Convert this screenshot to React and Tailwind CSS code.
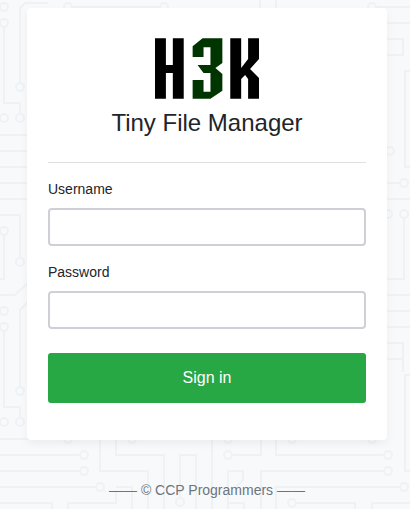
function CircuitBackground() {
  return (
    <svg
      className="pointer-events-none absolute left-0 top-0 -z-10"
      width="410"
      height="509"
      viewBox="0 0 410 509"
      fill="none"
      stroke="#eff2f4"
      strokeWidth="2"
      aria-hidden="true"
    >
      <path d="M4 27V103H20V114M20 83V8L25 3H48M72 7H160M0 135H30M0 151H30M0 167H30M0 183H30M0 199H30M0 215H20V258M4 235V279H0M0 295H15L30 281M4 331V407H20V418M20 387V310L30 300" />
      <path d="M0 439H30M0 455H80M0 471H80M0 487H96M0 503H52V509M68 509V503H116V492M116 487H132V509M100 436V471H148V509M116 436V455H164V509M180 498V455H196V509M212 436V509" />
      <path d="M232 455H261V436M276 436V455H384M384 471H261V509M400 487H276V509M296 503H355V509M372 509V503H410M228 509V471H243V480L236 487M228 503H244V509" />
      <path d="M260 0V8M276 0V8M376 7H410M385 23H410M385 39H403V55H385M410 71H405V167H410M385 183H400M385 199H410M404 218V279H385M385 295H410M385 311H410M385 327H410M385 343H403V359H385M403 359V372M410 375H405V471H410" />
      <g>
        <circle cx="4" cy="7" r="4" />
        <circle cx="4" cy="23" r="4" />
        <circle cx="4" cy="118" r="4" />
        <circle cx="20" cy="118" r="4" />
        <circle cx="20" cy="87" r="4" />
        <circle cx="4" cy="231" r="4" />
        <circle cx="20" cy="262" r="4" />
        <circle cx="4" cy="311" r="4" />
        <circle cx="4" cy="327" r="4" />
        <circle cx="4" cy="422" r="4" />
        <circle cx="20" cy="422" r="4" />
        <circle cx="20" cy="391" r="4" />
        <circle cx="68" cy="7" r="4" />
        <circle cx="164" cy="7" r="4" />
        <circle cx="84" cy="455" r="4" />
        <circle cx="84" cy="471" r="4" />
        <circle cx="100" cy="487" r="4" />
        <circle cx="68" cy="439" r="4" />
        <circle cx="132" cy="439" r="4" />
        <circle cx="180" cy="502" r="4" />
        <circle cx="228" cy="439" r="4" />
        <circle cx="292" cy="439" r="4" />
        <circle cx="372" cy="439" r="4" />
        <circle cx="228" cy="455" r="4" />
        <circle cx="388" cy="455" r="4" />
        <circle cx="388" cy="471" r="4" />
        <circle cx="404" cy="487" r="4" />
        <circle cx="292" cy="503" r="4" />
        <circle cx="388" cy="214" r="4" />
        <circle cx="404" cy="214" r="4" />
        <circle cx="404" cy="183" r="4" />
        <circle cx="390" cy="151" r="4" />
        <circle cx="372" cy="7" r="4" />
      </g>
    </svg>
  );
}

function Logo() {
  return (
    <svg width="104" height="62" viewBox="0 0 105 62" role="img" aria-label="H3K">
      <path fill="#000" d="M0 0H11V27H18V0H29V61H18V35H11V61H0Z" />
      <path
        fill="#003500"
        d="M48 0H68V25L61 30L68 36V53L56 61H38V42H49V54H56V35H49L43 27H56V9H49V19H38V8Z"
      />
      <path fill="#000" d="M76 0H87V30L94 21V0H105V21L96 31L105 40V61H94V41L91 37L87 41V61H76Z" />
    </svg>
  );
}

function Field({ id, label, type, autoComplete }) {
  return (
    <div className="mb-4">
      <label htmlFor={id} className="mb-2 block text-sm leading-[21px]">
        {label}
      </label>
      <input
        id={id}
        name={id}
        type={type}
        autoComplete={autoComplete}
        className="block h-[38px] w-full rounded border-2 border-[#ced0d6] bg-white px-3 text-sm outline-none focus:border-[#28a745]"
      />
    </div>
  );
}

export default function App() {
  return (
    <div className="relative isolate flex min-h-screen flex-col items-center overflow-hidden bg-[#f7f9fb] pl-1 pt-2 font-['Liberation_Sans',Arial,sans-serif] text-[#212529]">
      <CircuitBackground />
      <main className="w-full max-w-[360px] rounded-sm bg-white px-[21px] pb-[37px] pt-[30px] shadow-[0_4px_8px_rgba(0,0,0,0.05)]">
        <form onSubmit={(event) => event.preventDefault()}>
          <div className="flex flex-col items-center gap-2">
            <Logo />
            <h1 className="text-2xl leading-[30px]">Tiny File Manager</h1>
          </div>
          <hr className="mb-4 mt-6 border-[#dfe0e1]" />
          <Field id="username" label="Username" type="text" autoComplete="username" />
          <Field id="password" label="Password" type="password" autoComplete="current-password" />
          <button
            type="submit"
            className="mt-6 block h-[50px] w-full rounded-[3px] bg-[#28a745] text-base text-white"
          >
            Sign in
          </button>
        </form>
      </main>
      <footer className="mt-10 text-sm leading-[21px] text-[#6c757d]">
        —— © CCP Programmers ——
      </footer>
    </div>
  );
}
